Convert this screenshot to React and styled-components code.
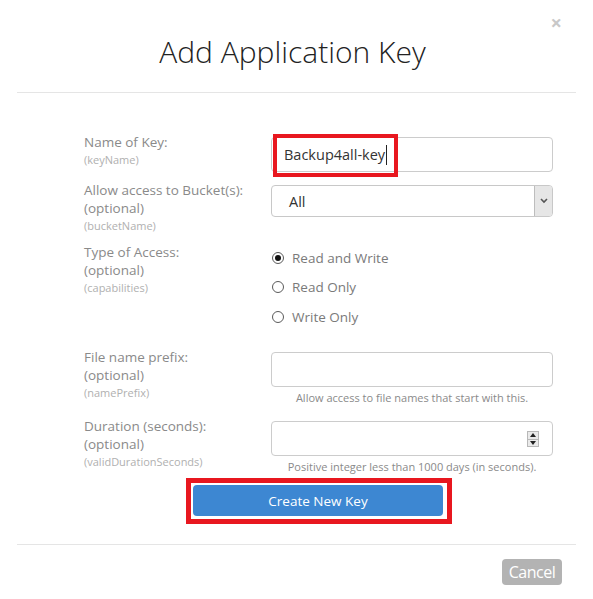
import React from 'react';
import styled, { createGlobalStyle } from 'styled-components';

const GlobalStyle = createGlobalStyle`
  html, body {
    margin: 0;
    padding: 0;
    background: #fff;
  }
  body {
    font-family: "Open Sans", "Liberation Sans", sans-serif;
  }
`;

const Modal = styled.div`
  width: 593px;
  height: 599px;
  background: #fff;
  position: relative;
  box-sizing: border-box;
`;

const Header = styled.div`
  margin: 0 17px;
  height: 93px;
  border-bottom: 1px solid #e5e5e5;
  display: flex;
  align-items: center;
  justify-content: center;
  box-sizing: border-box;
  padding: 11px 8px 0 0;
`;

const Title = styled.h2`
  margin: 0;
  font-weight: 300;
  font-size: 30px;
  color: #222;
`;

const Close = styled.span`
  position: absolute;
  right: 31px;
  top: 11px;
  font-size: 20px;
  font-weight: 700;
  color: #c8c8c8;
  line-height: 24px;
`;

const Form = styled.div`
  padding: 40px 0 0 84px;
`;

const Row = styled.div`
  display: flex;
  align-items: flex-start;
  margin-bottom: ${p => p.$gap ?? 9}px;
`;

const Label = styled.div`
  width: 187px;
  flex-shrink: 0;
  font-size: 13.5px;
  line-height: 18px;
  color: #8a8a8a;
`;

const Field = styled.div`
  display: block;
  font-size: 11px;
  line-height: 17px;
  color: #b0b0b0;
`;

const Control = styled.div`
  width: 282px;
  padding-top: 4px;
  position: relative;
`;

const TextBox = styled.div`
  height: 35px;
  box-sizing: border-box;
  border: 1px solid #ccc;
  border-radius: 4px;
  display: flex;
  align-items: center;
  padding: 0 12px;
  font-size: 14.5px;
  color: #333;
  position: relative;
`;

const Caret = styled.span`
  display: inline-block;
  width: 1px;
  height: 20px;
  background: #222;
  margin-left: 1px;
`;

const Highlight = styled.div`
  position: absolute;
  left: 2px;
  top: 1px;
  width: 125px;
  height: 43px;
  box-sizing: border-box;
  border: 4px solid #e8171f;
`;

const SelectBox = styled.div`
  height: 32px;
  box-sizing: border-box;
  border: 1px solid #c8c8c8;
  border-radius: 4px;
  display: flex;
  align-items: stretch;
  font-size: 14.5px;
  color: #333;
  overflow: hidden;
`;

const SelectValue = styled.div`
  flex: 1;
  display: flex;
  align-items: center;
  padding-left: 17px;
`;

const ArrowBox = styled.div`
  width: 17px;
  background: #e6e6e6;
  border-left: 1px solid #bdbdbd;
  display: flex;
  align-items: center;
  justify-content: center;
`;

const Radios = styled.div`
  margin-top: -4px;
  min-height: 96px;
`;

const RadioItem = styled.div`
  height: 29.5px;
  display: flex;
  align-items: center;
  font-size: 13.5px;
  color: #7a7a7a;
`;

const RadioDot = styled.span`
  width: 12px;
  height: 12px;
  border-radius: 50%;
  border: 1px solid #5a5a5a;
  box-sizing: border-box;
  margin: 0 8px 0 1px;
  display: flex;
  align-items: center;
  justify-content: center;

  &::after {
    content: '';
    width: 6px;
    height: 6px;
    border-radius: 50%;
    background: ${p => (p.$checked ? '#111' : 'transparent')};
  }
`;

const Hint = styled.div`
  text-align: center;
  font-size: 11px;
  line-height: 16px;
  margin-top: 3px;
  color: #8a8a8a;
`;

const Spinner = styled.div`
  position: absolute;
  right: 13px;
  top: 9px;
  width: 12px;
  height: 16px;
  border: 1px solid #b8b8b8;
  background: #eaeaea;
  box-sizing: border-box;
  display: flex;
  flex-direction: column;
`;

const SpinHalf = styled.div`
  flex: 1;
  display: flex;
  align-items: center;
  justify-content: center;
  border-top: ${p => (p.$down ? '1px solid #b8b8b8' : 'none')};
`;

const ButtonFrame = styled.div`
  margin: 3px 0 0 102px;
  width: 266px;
  box-sizing: border-box;
  border: 5px solid #e8171f;
  padding: 2px 4px 3px 2px;
`;

const PrimaryButton = styled.button`
  width: 250px;
  height: 31px;
  border: none;
  border-radius: 4px;
  background: #3d87d2;
  color: #fff;
  font-family: "Open Sans", "Liberation Sans", sans-serif;
  font-size: 13.5px;
  display: block;
  padding: 0;
`;

const Footer = styled.div`
  margin: 20px 17px 0;
  border-top: 1px solid #e5e5e5;
  padding: 14px 14px 0 0;
  display: flex;
  justify-content: flex-end;
`;

const CancelButton = styled.button`
  width: 60px;
  height: 26px;
  border: none;
  border-radius: 4px;
  background: #b3b3b3;
  color: #fff;
  font-family: "Open Sans", "Liberation Sans", sans-serif;
  font-size: 16px;
  letter-spacing: -0.5px;
  padding: 0;
`;

const Triangle = ({ down }) => (
  <svg width="6" height="4" viewBox="0 0 6 4">
    <path d={down ? 'M0 0 L6 0 L3 4 Z' : 'M0 4 L6 4 L3 0 Z'} fill="#222" />
  </svg>
);

const radios = [
  { label: 'Read and Write', checked: true },
  { label: 'Read Only' },
  { label: 'Write Only' },
];

export default function App() {
  return (
    <Modal>
      <GlobalStyle />
      <Close>×</Close>
      <Header>
        <Title>Add Application Key</Title>
      </Header>

      <Form>
        <Row>
          <Label>
            Name of Key:
            <Field>(keyName)</Field>
          </Label>
          <Control>
            <TextBox>
              Backup4all-key
              <Caret />
            </TextBox>
            <Highlight />
          </Control>
        </Row>

        <Row>
          <Label>
            Allow access to Bucket(s):
            <br />
            (optional)
            <Field>(bucketName)</Field>
          </Label>
          <Control>
            <SelectBox>
              <SelectValue>All</SelectValue>
              <ArrowBox>
                <svg width="8" height="6" viewBox="0 0 8 6">
                  <path d="M1 1 L4 4 L7 1" stroke="#555" strokeWidth="1.6" fill="none" />
                </svg>
              </ArrowBox>
            </SelectBox>
          </Control>
        </Row>

        <Row>
          <Label>
            Type of Access:
            <br />
            (optional)
            <Field>(capabilities)</Field>
          </Label>
          <Control>
            <Radios>
              {radios.map(r => (
                <RadioItem key={r.label}>
                  <RadioDot $checked={r.checked} />
                  {r.label}
                </RadioItem>
              ))}
            </Radios>
          </Control>
        </Row>

        <Row $gap={11}>
          <Label>
            File name prefix:
            <br />
            (optional)
            <Field>(namePrefix)</Field>
          </Label>
          <Control>
            <TextBox />
            <Hint>Allow access to file names that start with this.</Hint>
          </Control>
        </Row>

        <Row $gap={0}>
          <Label>
            Duration (seconds):
            <br />
            (optional)
            <Field>(validDurationSeconds)</Field>
          </Label>
          <Control>
            <TextBox>
              <Spinner>
                <SpinHalf>
                  <Triangle />
                </SpinHalf>
                <SpinHalf $down>
                  <Triangle down />
                </SpinHalf>
              </Spinner>
            </TextBox>
            <Hint>Positive integer less than 1000 days (in seconds).</Hint>
          </Control>
        </Row>

        <ButtonFrame>
          <PrimaryButton>Create New Key</PrimaryButton>
        </ButtonFrame>
      </Form>

      <Footer>
        <CancelButton>Cancel</CancelButton>
      </Footer>
    </Modal>
  );
}
